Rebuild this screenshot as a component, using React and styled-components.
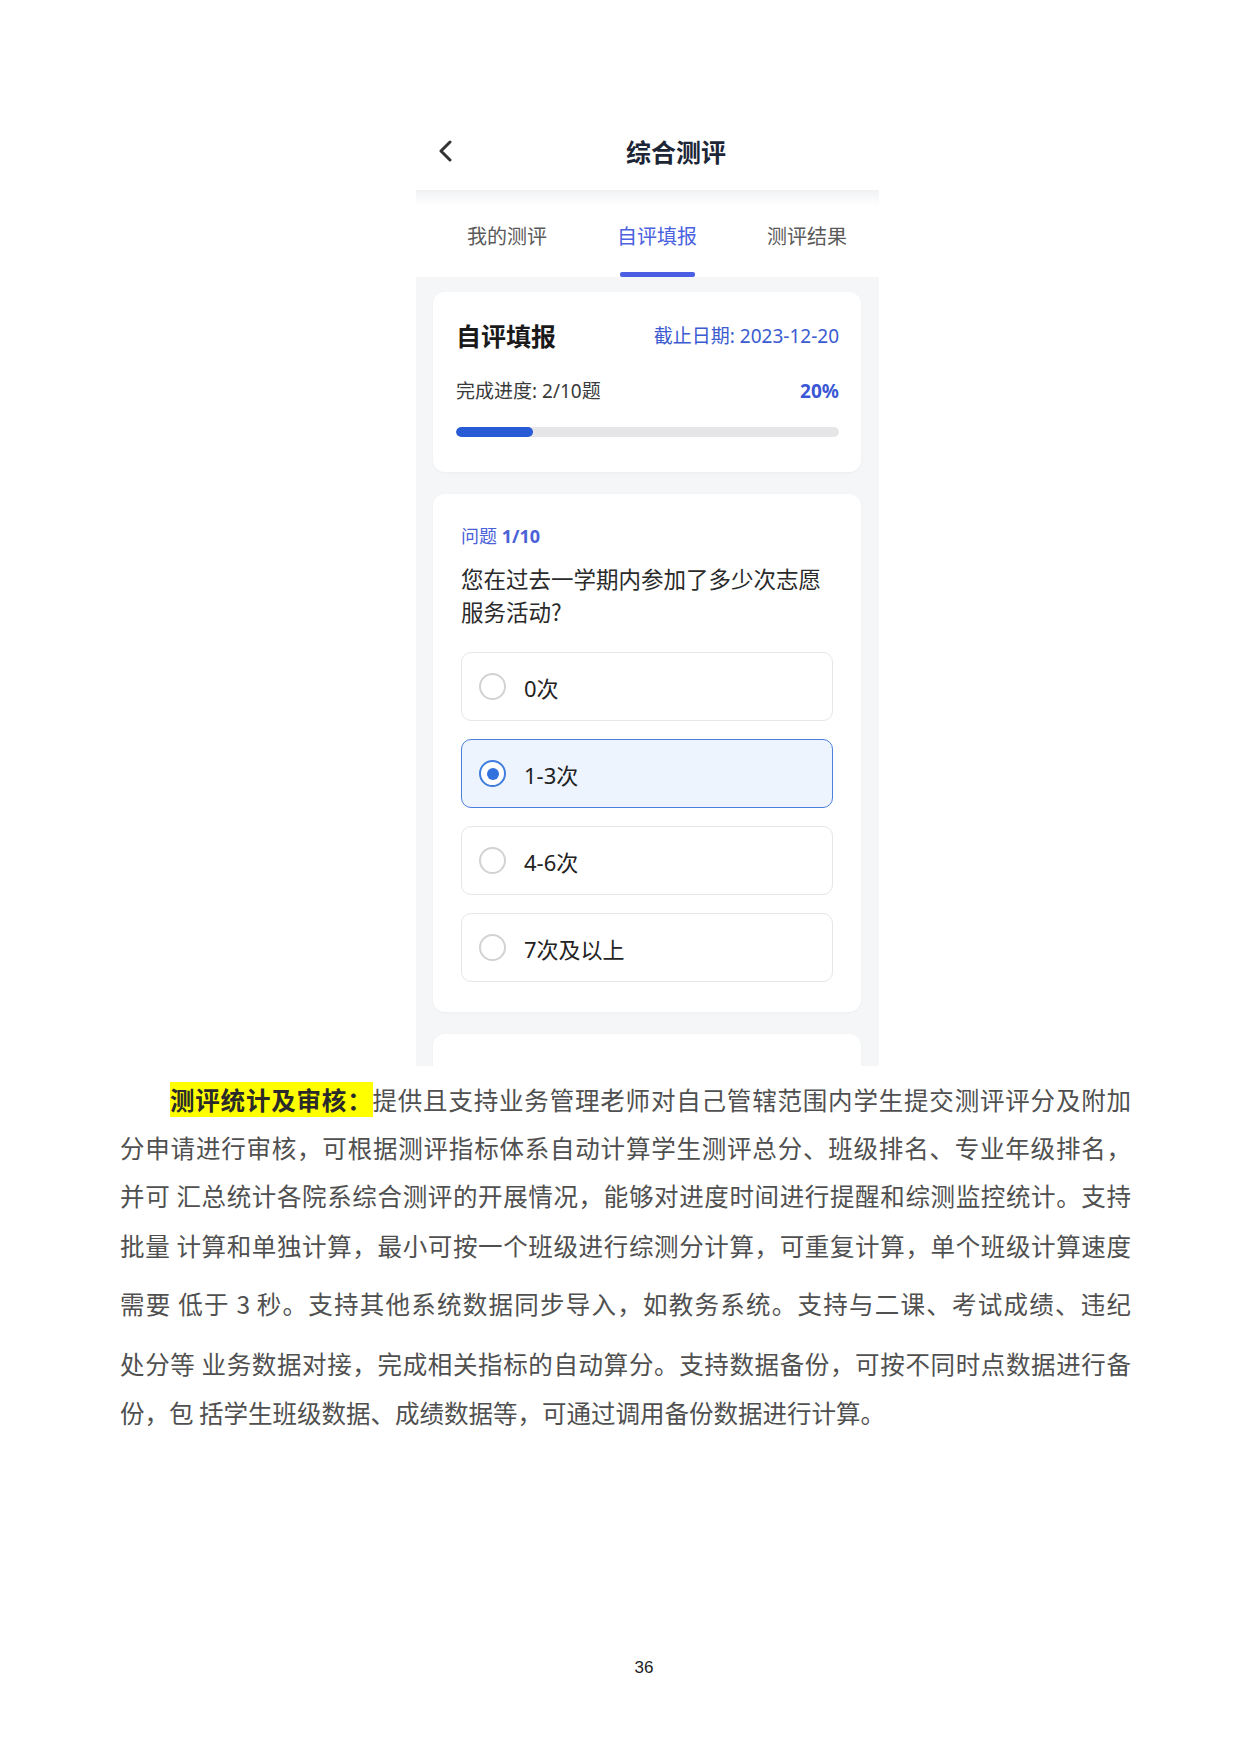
import React from "react";
import styled, { createGlobalStyle } from "styled-components";

const GlobalStyle = createGlobalStyle`
  body {
    margin: 0;
    background: #ffffff;
    font-family: "Noto Sans", "Noto Sans CJK SC", sans-serif;
  }
`;

const Page = styled.div`
  width: 1240px;
  min-height: 1755px;
  padding-top: 112px;
  box-sizing: border-box;
`;

// phone screenshot
const Phone = styled.div`
  width: 463px;
  margin-left: 416px;
`;

const Header = styled.div`
  height: 78px;
  display: flex;
  align-items: center;
  padding-left: 22px;
`;

const BackBtn = styled.div`
  width: 14px;
  height: 22px;
  display: flex;
`;

const Title = styled.h1`
  margin: 0 0 0 174px;
  font-family: "Noto Sans CJK SC", sans-serif;
  font-size: 25px;
  font-weight: 700;
  line-height: 1;
  color: #1c2636;
`;

const TabBar = styled.div`
  display: flex;
  height: 87px;
  padding-left: 16px;
  overflow: hidden;
  background: linear-gradient(to bottom, #f0f1f3 0, #f6f7f8 6px, #ffffff 16px);
`;

const Tab = styled.div`
  flex-shrink: 0;
  width: 150px;
  display: flex;
  flex-direction: column;
  align-items: center;
`;

const TabLabel = styled.div`
  flex: 1;
  display: flex;
  align-items: center;
  padding-top: 8px;
  font-family: "Noto Sans CJK SC", sans-serif;
  font-size: 20px;
  color: ${(p) => (p.active ? "#4a62e0" : "#5a5a5a")};
`;

const TabLine = styled.div`
  width: 75px;
  height: 5px;
  border-radius: 2px;
  background: ${(p) => (p.active ? "#4b5fe4" : "transparent")};
`;

const Body = styled.div`
  height: 789px;
  overflow: hidden;
  box-sizing: border-box;
  padding: 15px 18px 0 17px;
  background: #f5f6f8;
  display: flex;
  flex-direction: column;
  gap: 22px;
`;

const Card = styled.div`
  flex-shrink: 0;
  background: #ffffff;
  border-radius: 12px;
  box-shadow: 0 1px 3px rgba(0, 0, 0, 0.04);
  padding: ${(p) => p.pad};
  min-height: ${(p) => p.min || 0}px;
  box-sizing: border-box;
`;

const HeadRow = styled.div`
  display: flex;
  justify-content: space-between;
  align-items: center;
  height: 34px;
`;

const CardTitle = styled.div`
  font-family: "Noto Sans CJK SC", sans-serif;
  font-size: 25px;
  font-weight: 700;
  color: #1a1a1a;
`;

const Deadline = styled.div`
  font-size: 19px;
  color: #3b5bd0;
`;

const ProgressRow = styled.div`
  display: flex;
  justify-content: space-between;
  align-items: center;
  margin-top: 27px;
  line-height: 24px;
  font-size: 19px;
  color: #3a3a3a;
`;

const Percent = styled.span`
  font-weight: 700;
  color: #3a57d6;
`;

const Track = styled.div`
  margin-top: 24px;
  height: 10px;
  border-radius: 5px;
  background: #e6e6e8;
  overflow: hidden;
`;

const Fill = styled.div`
  height: 100%;
  border-radius: 5px;
  background: #2a5bd7;
`;

const QLabel = styled.div`
  line-height: 24px;
  font-size: 18px;
  color: #4a62d8;
  b {
    font-weight: 700;
  }
`;

const Question = styled.div`
  margin-top: 14px;
  font-family: "Noto Sans CJK SC", sans-serif;
  font-size: 22.5px;
  line-height: 33px;
  color: #2a2a2a;
`;

const Options = styled.div`
  margin-top: 24px;
  display: flex;
  flex-direction: column;
  gap: 18px;
`;

const Option = styled.div`
  height: 69px;
  box-sizing: border-box;
  display: flex;
  align-items: center;
  gap: 18px;
  padding-left: 17px;
  border-radius: 10px;
  border: ${(p) => (p.selected ? "1.5px solid #4a7fdc" : "1px solid #e4e6ea")};
  background: ${(p) => (p.selected ? "#eef4fe" : "#ffffff")};
`;

const Radio = styled.span`
  width: 27px;
  height: 27px;
  box-sizing: border-box;
  border-radius: 50%;
  border: ${(p) => (p.selected ? "2.5px solid #3f7de0" : "2px solid #d2d2d2")};
  background: #ffffff;
  display: flex;
  align-items: center;
  justify-content: center;
  &::after {
    content: "";
    width: 12px;
    height: 12px;
    border-radius: 50%;
    background: ${(p) => (p.selected ? "#3371dd" : "transparent")};
  }
`;

const OptionText = styled.span`
  font-size: 22px;
  color: #222222;
`;

// document text below the screenshot
const Para = styled.div`
  margin: 9px 0 0 120px;
  width: 1011px;
  font-family: "Noto Sans CJK SC", sans-serif;
  font-size: 24.5px;
  color: #505050;
`;

const Line = styled.div`
  height: ${(p) => p.h}px;
  line-height: ${(p) => p.h}px;
  padding-left: ${(p) => (p.indent ? 50 : 0)}px;
  text-align: justify;
  text-align-last: ${(p) => (p.last ? "left" : "justify")};
`;

const Mark = styled.span`
  font-weight: 700;
  color: #2a2a2a;
  background: #ffff00;
`;

const PageNum = styled.div`
  margin-top: 223px;
  padding-left: 48px;
  text-align: center;
  line-height: 20px;
  font-family: "Liberation Sans", Arial, sans-serif;
  font-size: 17px;
  color: #222222;
`;

const tabs = ["我的测评", "自评填报", "测评结果"];
const options = ["0次", "1-3次", "4-6次", "7次及以上"];

const lines = [
  { h: 50, text: "提供且支持业务管理老师对自己管辖范围内学生提交测评评分及附加" },
  { h: 46, text: "分申请进行审核，可根据测评指标体系自动计算学生测评总分、班级排名、专业年级排名，" },
  { h: 50, text: "并可 汇总统计各院系综合测评的开展情况，能够对进度时间进行提醒和综测监控统计。支持" },
  { h: 50, text: "批量 计算和单独计算，最小可按一个班级进行综测分计算，可重复计算，单个班级计算速度" },
  { h: 66, text: "需要 低于 3 秒。支持其他系统数据同步导入，如教务系统。支持与二课、考试成绩、违纪" },
  { h: 54, text: "处分等 业务数据对接，完成相关指标的自动算分。支持数据备份，可按不同时点数据进行备" },
  { h: 44, text: "份，包 括学生班级数据、成绩数据等，可通过调用备份数据进行计算。" },
];

const App = () => {
  const progress = 20;
  return (
    <Page>
      <GlobalStyle />
      <Phone>
        <Header>
          <BackBtn>
            <svg width="14" height="22" viewBox="0 0 14 22">
              <path d="M12 2 L3 11 L12 20" fill="none" stroke="#333" strokeWidth="3" strokeLinecap="round" strokeLinejoin="round" />
            </svg>
          </BackBtn>
          <Title>综合测评</Title>
        </Header>
        <TabBar>
          {tabs.map((t, i) => (
            <Tab key={t}>
              <TabLabel active={i === 1}>{t}</TabLabel>
              <TabLine active={i === 1} />
            </Tab>
          ))}
        </TabBar>
        <Body>
          <Card pad="26px 22px 35px 23px">
            <HeadRow>
              <CardTitle>自评填报</CardTitle>
              <Deadline>截止日期: 2023-12-20</Deadline>
            </HeadRow>
            <ProgressRow>
              <span>完成进度: 2/10题</span>
              <Percent>{progress}%</Percent>
            </ProgressRow>
            <Track>
              <Fill style={{ width: `${progress}%` }} />
            </Track>
          </Card>
          <Card pad="30px 28px 30px 28px">
            <QLabel>
              问题 <b>1/10</b>
            </QLabel>
            <Question>您在过去一学期内参加了多少次志愿服务活动?</Question>
            <Options>
              {options.map((o, i) => (
                <Option key={o} selected={i === 1}>
                  <Radio selected={i === 1} />
                  <OptionText>{o}</OptionText>
                </Option>
              ))}
            </Options>
          </Card>
          <Card pad="0" min={120} />
        </Body>
      </Phone>
      <Para>
        {lines.map((l, i) => (
          <Line key={i} h={l.h} indent={i === 0} last={i === lines.length - 1}>
            {i === 0 && <Mark>测评统计及审核：</Mark>}
            {l.text}
          </Line>
        ))}
      </Para>
      <PageNum>36</PageNum>
    </Page>
  );
};

export default App;
